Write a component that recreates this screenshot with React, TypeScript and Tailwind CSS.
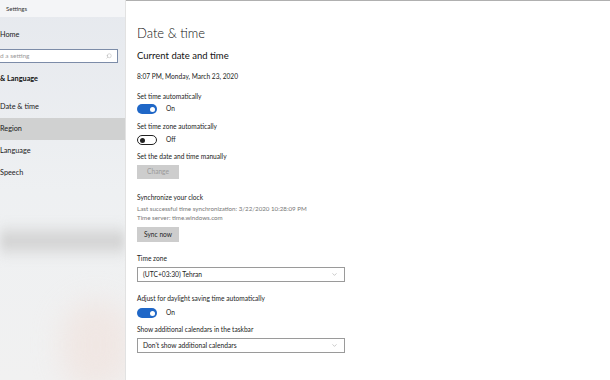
import { Search, ChevronDown } from "lucide-react";

const font = { fontFamily: 'Lato, "Noto Sans", Arial, sans-serif' };

function Toggle({ on }: { on: boolean }) {
  return on ? (
    <span className="flex h-[10px] w-[20px] items-center justify-end rounded-full bg-[#1f67c7] pr-[2px]">
      <span className="h-[5px] w-[5px] rounded-full bg-white" />
    </span>
  ) : (
    <span className="flex h-[10px] w-[20px] items-center rounded-full border-[1.5px] border-[#222] pl-[2px]">
      <span className="h-[5px] w-[5px] rounded-full bg-[#222]" />
    </span>
  );
}

function Select({ value }: { value: string }) {
  return (
    <div className="flex h-[15px] w-[208px] items-center justify-between border border-[#9a9a9a] bg-white pl-[5px] pr-[6px]">
      <span className="text-[6.7px] text-[#222]">{value}</span>
      <ChevronDown size={7} strokeWidth={1.5} className="text-[#888]" />
    </div>
  );
}

function NavItem({ label, active }: { label: string; active?: boolean }) {
  return (
    <div
      className={`flex h-[22px] items-center text-[7.3px] text-[#1a1a1a] ${
        active ? "bg-[#c9c9c9]/80" : ""
      }`}
    >
      {label}
    </div>
  );
}

export default function App() {
  return (
    <div className="flex h-[380px] w-[610px] overflow-hidden bg-white" style={font}>
      <aside className="relative h-full w-[126px] shrink-0 overflow-hidden border-r border-[#e2e2e2] bg-gradient-to-b from-[#e6e9ee] via-[#eef0f2] to-[#f1f1f1]">
        <div className="pointer-events-none absolute inset-x-0 top-[222px] h-[38px] bg-gradient-to-b from-transparent via-[#d0d0d0] to-transparent blur-[5px]" />
        <div className="pointer-events-none absolute bottom-[-10px] right-[-6px] h-[90px] w-[70px] rounded-full bg-[#f0e3de] opacity-70 blur-[14px]" />
        <div className="relative flex flex-col">
          <div className="flex h-[17px] items-center bg-[#f4f5f7] pl-[6px] text-[6px] text-[#333]">
            Settings
          </div>
          <div className="mt-[11px] flex h-[14px] items-center text-[7.3px] text-[#1a1a1a]">Home</div>
          <div className="ml-[-4px] mt-[7px] flex h-[14px] w-[122px] items-center justify-between border border-[#7c8ca8] bg-white pl-[3px] pr-[5px]">
            <span className="text-[6.5px] text-[#9a9a9a]">d a setting</span>
            <Search size={6} strokeWidth={1.5} className="-scale-x-100 text-[#999]" />
          </div>
          <div className="mt-[9px] flex h-[14px] items-center text-[7.3px] font-bold text-[#111]">
            &amp; Language
          </div>
          <div className="mt-[10px]">
            <NavItem label="Date & time" />
            <NavItem label="Region" active />
            <NavItem label="Language" />
            <NavItem label="Speech" />
          </div>
        </div>
      </aside>

      <main className="flex-1 border-t border-[#b0b0b0] pl-[11px] pt-[22px] text-[#222]">
        <h1 className="h-[21px] text-[13px] font-light leading-[21px] text-[#111]">Date &amp; time</h1>
        <h2 className="mt-[4px] h-[15px] text-[9.5px] leading-[15px] text-[#111]">Current date and time</h2>
        <p className="mt-[7px] h-[12px] text-[6.6px] leading-[12px]">8:07 PM, Monday, March 23, 2020</p>

        <p className="mt-[8px] h-[13px] text-[6.6px] leading-[13px]">Set time automatically</p>
        <div className="mt-[1px] flex items-center gap-[9px]">
          <Toggle on />
          <span className="text-[6.6px]">On</span>
        </div>

        <p className="mt-[6px] h-[13px] text-[6.6px] leading-[13px]">Set time zone automatically</p>
        <div className="mt-[2px] flex items-center gap-[9px]">
          <Toggle on={false} />
          <span className="text-[6.6px]">Off</span>
        </div>

        <p className="mt-[5px] h-[13px] text-[6.6px] leading-[13px]">Set the date and time manually</p>
        <div className="mt-[2px] flex h-[14px] w-[42px] items-center justify-center bg-[#cdcdcd] text-[6.6px] text-[#9a9a9a]">
          Change
        </div>

        <p className="mt-[12px] h-[12px] text-[6.6px] leading-[12px]">Synchronize your clock</p>
        <p className="mt-[1px] h-[9px] text-[6.2px] leading-[9px] text-[#777]">
          Last successful time synchronization: 3/22/2020 10:28:09 PM
        </p>
        <p className="h-[9px] text-[6.2px] leading-[9px] text-[#777]">Time server: time.windows.com</p>
        <div className="mt-[5px] flex h-[15px] w-[42px] items-center justify-center bg-[#cdcdcd] text-[6.6px] text-[#222]">
          Sync now
        </div>

        <p className="mt-[10px] h-[13px] text-[6.6px] leading-[13px]">Time zone</p>
        <div className="mt-[2px]">
          <Select value="(UTC+03:30) Tehran" />
        </div>

        <p className="mt-[10px] h-[13px] text-[6.6px] leading-[13px]">Adjust for daylight saving time automatically</p>
        <div className="mt-[3px] flex items-center gap-[9px]">
          <Toggle on />
          <span className="text-[6.6px]">On</span>
        </div>

        <p className="mt-[5px] h-[13px] text-[6.6px] leading-[13px]">Show additional calendars in the taskbar</p>
        <div className="mt-[2px]">
          <Select value="Don't show additional calendars" />
        </div>
      </main>
    </div>
  );
}
